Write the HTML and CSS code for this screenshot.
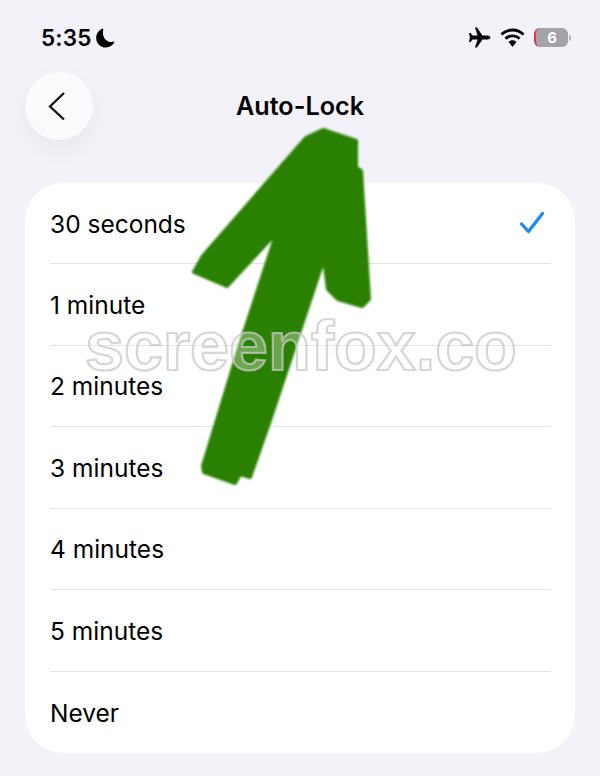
FILE: index.html
```html
<!DOCTYPE html>
<html lang="en">
<head>
<meta charset="utf-8">
<title>Auto-Lock</title>
<link rel="stylesheet" href="styles.css">
</head>
<body>
<div class="screen">
  <header class="status">
    <div class="status-left">
      <span class="time">5:35</span>
      <svg class="moon" viewBox="0 0 20 20"><path d="M7.2 0.6C3 1.8 0.2 5.6 0.2 9.9c0 5.4 4.3 9.6 9.6 9.6 3.9 0 7.4-2.3 8.9-5.9-0.9 0.3-1.9 0.5-3 0.5-5 0-8.700-3.800-8.700-8.800 0-1.600 0.200-3.100 0.200-4.700z"/></svg>
    </div>
    <div class="status-right">
      <svg class="plane" viewBox="0 0 24 22"><path d="M23.4 11c0-1.2-1.4-2.1-3-2.1h-5.300L9.300 0.500H7.200L10 8.900H4.600L2.700 6.400H0.900L2 11 0.900 15.600H2.700L4.600 13.100H10L7.200 21.500H9.300L15.100 13.100h5.300c1.600 0 3-0.900 3-2.100z"/></svg>
      <svg class="wifi" viewBox="0 0 24 18"><path d="M12 3.200c3.500 0 6.700 1.300 9.100 3.600l1.700-1.800C19.900 2.100 16.100 0.400 12 0.400S4.100 2.100 1.200 5l1.700 1.800C5.300 4.500 8.500 3.200 12 3.200z"/><path d="M12 8.400c2.100 0 4 0.800 5.400 2.100l1.800-1.800C17.300 6.900 14.800 5.800 12 5.800S6.700 6.900 4.800 8.700l1.800 1.800C8 9.200 9.900 8.400 12 8.400z"/><path d="M12 11c-1.400 0-2.600 0.500-3.600 1.400L12 17l3.600-4.600C14.600 11.500 13.400 11 12 11z"/></svg>
      <div class="battery"><span class="battery-level">6</span></div>
      <span class="battery-cap"></span>
    </div>
  </header>

  <nav class="nav">
    <button class="back" aria-label="Back">
      <svg viewBox="0 0 18 30"><path d="M16 2 2 15.500 16 28.500"/></svg>
    </button>
    <h1 class="title">Auto-Lock</h1>
  </nav>

  <main class="card">
    <div class="row"><span class="label">30 seconds</span>
      <svg class="check" viewBox="0 0 26 24"><path d="M2.500 13 9.500 20.500 23.500 2.500"/></svg>
    </div>
    <div class="row"><span class="label">1 minute</span></div>
    <div class="row"><span class="label">2 minutes</span></div>
    <div class="row"><span class="label">3 minutes</span></div>
    <div class="row"><span class="label">4 minutes</span></div>
    <div class="row"><span class="label">5 minutes</span></div>
    <div class="row"><span class="label">Never</span></div>
  </main>

  <svg class="arrow" viewBox="0 0 600 776"><path d="M306 138 323 130 356 141 356 168 361 171 369 299 362 306 338 299 328 289 324 258 270 420 250 477 240 474 235 483 204 472 203 466 240 345 277 232 227 286 194 272 203 256z"/></svg>
  <div class="watermark">screenfox.co</div>
</div>
</body>
</html>
```
FILE: styles.css
```css
* { box-sizing: border-box; }
html, body { margin: 0; padding: 0; }
body {
  background: #f2f2f8;
  font-family: "Inter", "Liberation Sans", sans-serif;
  color: #000;
}
.screen {
  position: relative;
  width: 600px;
  height: 776px;
  overflow: hidden;
  padding: 0 25px;
}
.status {
  display: flex;
  justify-content: space-between;
  align-items: center;
  height: 72px;
  padding: 3px 4px 0 17px;
}
.status-left { display: flex; align-items: center; gap: 4px; }
.time { font-size: 22.500px; font-weight: 600; letter-spacing: 0.2px; margin-left: -1px; }
.moon { width: 20px; height: 20px; fill: #000; }
.status-right { display: flex; align-items: center; }
.plane { width: 23px; height: 21px; fill: #000; margin-right: 8px; }
.wifi { width: 27px; height: 20px; fill: #000; margin-right: 8px; }
.battery {
  width: 34px;
  height: 19px;
  border-radius: 6px;
  background: #a3a3a8;
  border-left: 2px solid #e5344b;
  display: flex;
  align-items: center;
  justify-content: center;
}
.battery-level { color: #fff; font-size: 15px; font-weight: 700; }
.battery-cap {
  width: 2px;
  height: 6px;
  margin-left: 1px;
  background: #b4b4b8;
  border-radius: 0 2px 2px 0;
}
.nav {
  position: relative;
  display: flex;
  align-items: center;
  justify-content: center;
  height: 68px;
}
.back {
  position: absolute;
  left: 0;
  top: 0;
  width: 68px;
  height: 68px;
  border: 0;
  padding: 0;
  border-radius: 50%;
  background: #fbfbfe;
  box-shadow: 0 8px 24px rgba(0, 0, 0, 0.05);
  display: flex;
  align-items: center;
  justify-content: center;
}
.back svg {
  width: 18px;
  height: 30px;
  fill: none;
  stroke: #111;
  stroke-width: 2.300;
  margin-right: 5px;
}
.title {
  margin: 0;
  font-size: 25.200px;
  font-weight: 600;
  line-height: 1;
  transform: translateY(1px);
}
.card {
  margin-top: 43px;
  height: 570px;
  padding: 0 24px 0 25px;
  background: #fff;
  border-radius: 38px;
}
.row {
  display: flex;
  align-items: center;
  justify-content: space-between;
  height: 81.500px;
  font-size: 24.500px;
  border-bottom: 1.500px solid #e3e3e6;
}
.row:first-child { height: 81px; }
.row:last-child { border-bottom: 0; }
.label { padding-top: 1px; }
.check {
  width: 26px;
  height: 24px;
  fill: none;
  stroke: #1a8af5;
  stroke-width: 3.200;
  stroke-linecap: round;
  stroke-linejoin: round;
  margin-right: 6px;
}
.arrow {
  position: absolute;
  left: 0;
  top: 0;
  width: 600px;
  height: 776px;
  fill: #2a8000;
  stroke: #2a8000;
  stroke-width: 4;
  stroke-linejoin: round;
  filter: blur(1.200px);
}
.watermark {
  position: absolute;
  left: 85px;
  top: 306px;
  font-family: "Liberation Sans", sans-serif;
  font-size: 70px;
  font-weight: 700;
  line-height: 80px;
  color: rgba(255, 255, 255, 0.3);
  -webkit-text-stroke: 2.200px rgba(200, 200, 200, 0.75);
  white-space: nowrap;
}
```
